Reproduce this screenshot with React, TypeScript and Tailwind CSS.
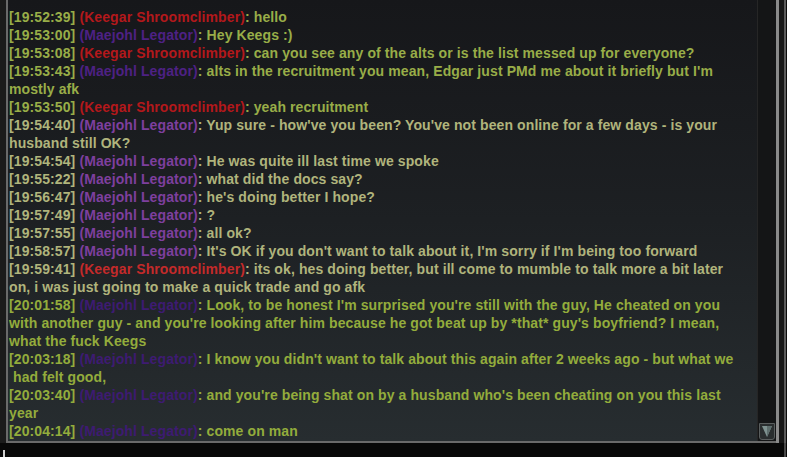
import React from "react";

type Who = "K" | "M";
type Msg = { t: string; who: Who; lines: string[]; tone: "a" | "b" | "c" };

const msgs: Msg[] = [
  { t: "19:52:39", who: "K", tone: "a", lines: ["hello"] },
  { t: "19:53:00", who: "M", tone: "a", lines: ["Hey Keegs :)"] },
  { t: "19:53:08", who: "K", tone: "a", lines: ["can you see any of the alts or is the list messed up for everyone?"] },
  {
    t: "19:53:43",
    who: "M",
    tone: "a",
    lines: ["alts in the recruitment you mean, Edgar just PMd me about it briefly but I'm", "mostly afk"],
  },
  { t: "19:53:50", who: "K", tone: "a", lines: ["yeah recruitment"] },
  {
    t: "19:54:40",
    who: "M",
    tone: "b",
    lines: ["Yup sure - how've you been? You've not been online for a few days - is your", "husband still OK?"],
  },
  { t: "19:54:54", who: "M", tone: "b", lines: ["He was quite ill last time we spoke"] },
  { t: "19:55:22", who: "M", tone: "b", lines: ["what did the docs say?"] },
  { t: "19:56:47", who: "M", tone: "b", lines: ["he's doing better I hope?"] },
  { t: "19:57:49", who: "M", tone: "b", lines: ["?"] },
  { t: "19:57:55", who: "M", tone: "b", lines: ["all ok?"] },
  { t: "19:58:57", who: "M", tone: "b", lines: ["It's OK if you don't want to talk about it, I'm sorry if I'm being too forward"] },
  {
    t: "19:59:41",
    who: "K",
    tone: "b",
    lines: [
      "its ok, hes doing better, but ill come to mumble to talk more a bit later",
      "on, i was just going to make a quick trade and go afk",
    ],
  },
  {
    t: "20:01:58",
    who: "M",
    tone: "c",
    lines: [
      "Look, to be honest I'm surprised you're still with the guy, He cheated on you",
      "with another guy - and you're looking after him because he got beat up by *that* guy's boyfriend? I mean,",
      "what the fuck Keegs",
    ],
  },
  {
    t: "20:03:18",
    who: "M",
    tone: "c",
    lines: ["I know you didn't want to talk about this again after 2 weeks ago - but what we", " had felt good,"],
  },
  {
    t: "20:03:40",
    who: "M",
    tone: "c",
    lines: ["and you're being shat on by a husband who's been cheating on you this last", "year"],
  },
  { t: "20:04:14", who: "M", tone: "c", lines: ["come on man"] },
];

// text colour / name colour per fade tone
const textCls = { a: "text-[#98ad48]", b: "text-[#b0b47c]", c: "text-[#93ac3c]" };
const nameCls = {
  a: { K: "text-[#b3181b]", M: "text-[#4e2184]" },
  b: { K: "text-[#c42a2a]", M: "text-[#7e3f9e]" },
  c: { K: "text-[#b3181b]", M: "text-[#3e1b72]" },
};

function Line({ m }: { m: Msg }) {
  const name = m.who === "K" ? "Keegar Shroomclimber" : "Maejohl Legator";
  return (
    <div className={textCls[m.tone]}>
      {m.lines.map((l, i) => (
        <div key={i} className="whitespace-pre h-[18px]">
          {i === 0 ? (
            <>
              [{m.t}] <span className={nameCls[m.tone][m.who]}>({name})</span>: {l}
            </>
          ) : (
            l
          )}
        </div>
      ))}
    </div>
  );
}

export default function App() {
  return (
    <div className="w-[787px] h-[457px] bg-[#080808] overflow-hidden flex flex-col">
      <div className="h-[443px] flex">
        <div className="w-[6px] bg-[#1b1b1b]"></div>
        <div className="flex-1 flex border-l-2 border-b-2 border-[#6a6a6a] bg-gradient-to-b from-[#16171a] via-[#1d2023] to-[#272d30]">
          {/* chat text */}
          <div
            className="flex-1 pt-[8px] pl-[1px] text-[14px] leading-[18px] font-bold tracking-[0.1px] overflow-hidden"
            style={{ fontFamily: '"Liberation Sans", Arial, sans-serif' }}
          >
            {msgs.map((m) => (
              <Line key={m.t} m={m} />
            ))}
          </div>
          {/* scrollbar */}
          <div className="w-[19px] border-l border-[#262626] bg-[#141516] flex flex-col justify-end pb-[1px] pl-[1px]">
            <div className="w-[16px] h-[17px] border border-[#5a5e5e] rounded-b-[3px] bg-[#2a2e2f] flex items-start justify-center pt-[2px]">
              <svg width="10" height="11" viewBox="0 0 10 11">
                <path d="M0 0 H10 L5 11 Z" fill="#7f9290" />
                <path d="M5 0 H10 L5 11 Z" fill="#5e6e6d" />
              </svg>
            </div>
          </div>
        </div>
        <div className="w-[3px] bg-[#8a8a8a]"></div>
        <div className="w-[5px] bg-[#181818]"></div>
        <div className="w-[2px] bg-[#5c5c5c]"></div>
        <div className="w-[1px] bg-[#0c0c0c]"></div>
      </div>
      <div className="flex-1 flex">
        <div className="w-[3px]"></div>
        <div className="w-[2px] mt-[7px] bg-[#d0d0d0]"></div>
        <div className="flex-1"></div>
        <div className="w-[2px] bg-[#4a4a4a]"></div>
        <div className="w-[1px]"></div>
      </div>
    </div>
  );
}
